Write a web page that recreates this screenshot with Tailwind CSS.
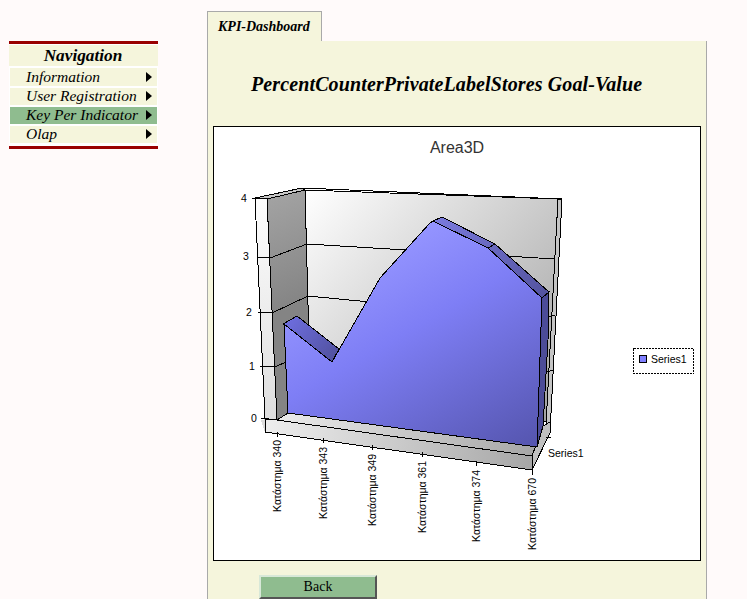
<!doctype html>
<html lang="en">
  <head>
    <meta charset="UTF-8">
    <title>KPI-Dashboard</title>
    <script src="https://cdn.jsdelivr.net/npm/@tailwindcss/browser@4"></script>
  </head>

  <body class="bg-[#fffafa] h-[599px] overflow-hidden flex items-start font-['Liberation_Serif',serif] text-black">
    <!-- Navigation -->
    <nav class="w-[149px] mt-[41px] ml-[9px] border-y-[3px] border-[#990000] bg-white pt-px pb-[3px]">
      <div class="h-[21px] pr-px bg-[#f5f5dc] text-center text-[17.3px] leading-[21px] font-bold italic">Navigation</div>
      <ul class="mt-[2px] mx-px flex flex-col gap-[2px] text-[15.5px] italic">
        <li class="h-[18px] bg-[#f5f5dc] pl-4 pr-[5px] flex items-center justify-between">
          <span>Information</span><span class="w-0 h-0 border-y-[5px] border-y-transparent border-l-[6px] border-l-black"></span>
        </li>
        <li class="h-[17px] pb-px bg-[#f5f5dc] pl-4 pr-[5px] flex items-center justify-between">
          <span>User Registration</span><span class="w-0 h-0 border-y-[5px] border-y-transparent border-l-[6px] border-l-black"></span>
        </li>
        <li class="h-[17px] pb-px bg-[#8fbc8f] pl-4 pr-[5px] flex items-center justify-between">
          <span>Key Per Indicator</span><span class="w-0 h-0 border-y-[5px] border-y-transparent border-l-[6px] border-l-black"></span>
        </li>
        <li class="h-[17px] pb-px bg-[#f5f5dc] pl-4 pr-[5px] flex items-center justify-between">
          <span>Olap</span><span class="w-0 h-0 border-y-[5px] border-y-transparent border-l-[6px] border-l-black"></span>
        </li>
      </ul>
    </nav>

    <!-- Main -->
    <main class="w-[500px] ml-[49px] mt-[11px]">
      <div class="w-[115px] h-[30px] border-t border-x border-[#a9a9a9] bg-[#f5f5dc] flex items-center pl-[10px] text-sm font-bold italic whitespace-nowrap">KPI-Dashboard</div>
      <div class="h-[558px] border-x border-[#a9a9a9] bg-[#f5f5dc] pl-[5px]">
        <h1 class="pt-[32px] pl-[38px] text-xl leading-[23px] font-bold italic whitespace-nowrap tracking-[0.12px]">PercentCounterPrivateLabelStores Goal-Value</h1>
        <div class="mt-[30px] w-[488px] h-[435px] border border-black bg-white">
          <svg class="block" width="486" height="433" viewBox="214 127 486 433" shape-rendering="crispEdges">
            <defs>
              <linearGradient id="backWall" gradientUnits="userSpaceOnUse" x1="305" y1="190" x2="558" y2="420">
                <stop offset="0" stop-color="#ffffff"/><stop offset="1" stop-color="#a0a0a0"/>
              </linearGradient>
              <linearGradient id="sideWall" gradientUnits="userSpaceOnUse" x1="267" y1="200" x2="310" y2="300">
                <stop offset="0" stop-color="#a2a2a2"/><stop offset="1" stop-color="#848484"/>
              </linearGradient>
              <linearGradient id="strip" gradientUnits="userSpaceOnUse" x1="255" y1="200" x2="270" y2="430">
                <stop offset="0" stop-color="#fdfdfd"/><stop offset="1" stop-color="#dcdcdc"/>
              </linearGradient>
              <linearGradient id="floor" gradientUnits="userSpaceOnUse" x1="265" y1="420" x2="532" y2="470">
                <stop offset="0" stop-color="#eeeeee"/><stop offset="1" stop-color="#a6a6a6"/>
              </linearGradient>
              <linearGradient id="areaFront" gradientUnits="userSpaceOnUse" x1="420" y1="230" x2="540" y2="440">
                <stop offset="0" stop-color="#9494ff"/><stop offset="0.34" stop-color="#7e7ef5"/><stop offset="1" stop-color="#5656b0"/>
              </linearGradient>
              <linearGradient id="areaTop" gradientUnits="userSpaceOnUse" x1="430" y1="215" x2="550" y2="300">
                <stop offset="0" stop-color="#7c7ce0"/><stop offset="1" stop-color="#52529c"/>
              </linearGradient>
              <linearGradient id="areaNotch" gradientUnits="userSpaceOnUse" x1="285" y1="320" x2="338" y2="360">
                <stop offset="0" stop-color="#6e6ee0"/><stop offset="1" stop-color="#50509c"/>
              </linearGradient>
            </defs>

            <g stroke="#000" stroke-width="1">
              <!-- walls -->
              <polygon points="255,198 267,199 277,420 261,420 265,432" fill="url(#strip)" stroke="none"/>
              <polyline points="255,198 265,419 265,432" fill="none"/>
              <polygon points="255,198 302,188 305,190 267,199" fill="#c8c8c8"/>
              <polygon points="305,190 558,199 550,422 310,380" fill="url(#backWall)"/>
              <polygon points="267,199 305,190 310,380 288,413 277,420" fill="url(#sideWall)"/>
              <polygon points="558,199 562,199 550,433 546,425" fill="#c4c4c4"/>
              <polyline points="302,188 562,199" fill="none"/>

              <!-- gridlines -->
              <polyline points="257,257 270,258 307,244 555,259" fill="none"/>
              <polyline points="258,312 272,313 308,296 370,302" fill="none"/>
              <polyline points="260,366 275,367 286,362" fill="none"/>
              <line x1="549" y1="317" x2="555" y2="315"/>
              <line x1="547" y1="372" x2="553" y2="370"/>
              <line x1="252" y1="198" x2="267" y2="198"/>

              <!-- floor -->
              <polygon points="265,419 277,420 288,413 537,447 532,456 532,470 265,432" fill="url(#floor)"/>
              <line x1="261" y1="418" x2="277" y2="420"/>
              <line x1="277" y1="420" x2="532" y2="456"/>
              <polygon points="532,456 543,426 550,422 550,433 532,470" fill="#c0c0c0"/>

              <!-- area -->
              <polygon points="283,324 297,316 339,349 332,362" fill="url(#areaNotch)"/>
              <polygon points="433,221 442,217 495,244 488,248" fill="url(#areaTop)"/>
              <polygon points="488,248 495,244 549,292 542,298" fill="url(#areaTop)"/>
              <polygon points="542,298 549,292 548,340 543,426 537,447" fill="#4c4c98"/>
              <polygon points="284,324 332,362 380,278 430,223 433,221 488,248 542,298 537,447 288,413" fill="url(#areaFront)"/>

              <!-- axis ticks -->
              <line x1="277" y1="432" x2="277" y2="437"/>
              <line x1="323" y1="438" x2="323" y2="443"/>
              <line x1="372" y1="445" x2="372" y2="450"/>
              <line x1="422" y1="452" x2="422" y2="457"/>
              <line x1="476" y1="461" x2="476" y2="466"/>
              <line x1="532" y1="470" x2="532" y2="475"/>
              <line x1="546" y1="437" x2="551" y2="437"/>
            </g>

            <g shape-rendering="auto" class="font-['Liberation_Sans',sans-serif] text-[10.5px]" fill="#000">
              <text x="457" y="153" text-anchor="middle" fill="#333" class="text-base">Area3D</text>
              <text x="241" y="202">4</text>
              <text x="243" y="260">3</text>
              <text x="246" y="316">2</text>
              <text x="249" y="370">1</text>
              <text x="251" y="422">0</text>
              <text x="548" y="457">Series1</text>
              <text transform="translate(281 512) rotate(-90)">Κατάστημα 340</text>
              <text transform="translate(327 519) rotate(-90)">Κατάστημα 343</text>
              <text transform="translate(376 526) rotate(-90)">Κατάστημα 349</text>
              <text transform="translate(426 533) rotate(-90)">Κατάστημα 361</text>
              <text transform="translate(480 542) rotate(-90)">Κατάστημα 374</text>
              <text transform="translate(536 550) rotate(-90)">Κατάστημα 670</text>
              <text x="651" y="363">Series1</text>
            </g>

            <!-- legend -->
            <rect x="633.5" y="348.5" width="60" height="25" fill="none" stroke="#000" stroke-dasharray="2 1"/>
            <rect x="639.5" y="355.5" width="7" height="7" fill="#8080ff" stroke="#000"/>
          </svg>
        </div>
        <button class="block mt-[14px] ml-[46px] w-[118px] h-[24px] border-2 border-t-[#d8e8d8] border-l-[#d8e8d8] border-r-[#555555] border-b-[#555555] bg-[#8fbc8f] text-sm leading-none text-center">Back</button>
      </div>
    </main>
  </body>
</html>
